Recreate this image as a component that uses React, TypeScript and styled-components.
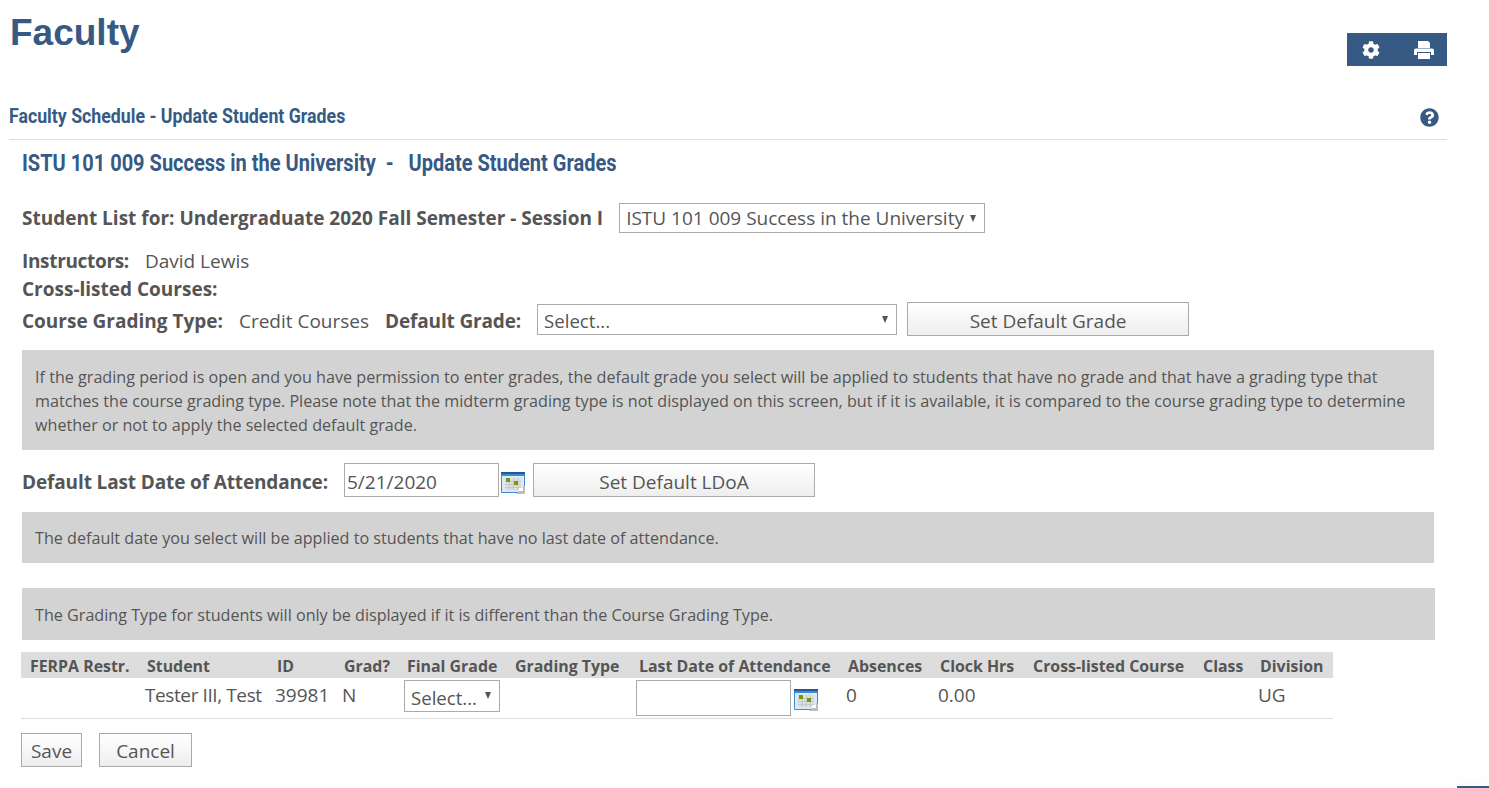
import styled, { createGlobalStyle } from 'styled-components';
import { FaCog, FaQuestionCircle } from 'react-icons/fa';

const GlobalStyle = createGlobalStyle`
  html, body {
    margin: 0;
    padding: 0;
    background: #fff;
    color: #555;
    font-family: "Open Sans", "Liberation Sans", sans-serif;
    font-size: 16px;
  }
  * { box-sizing: border-box; }
`;

const Page = styled.div`
  width: 1489px;
  height: 788px;
  overflow: hidden;
  position: relative;
  padding: 0 42px 0 9px;
`;

const TopBar = styled.div`
  display: flex;
  justify-content: space-between;
  height: 96px;
`;

const PageTitle = styled.h1`
  margin: 12px 0 0 1px;
  font: bold 37px/42px "Liberation Sans", Arial, sans-serif;
  color: #375a85;
`;

const Toolbar = styled.div`
  width: 100px;
  height: 33px;
  margin-top: 33px;
  background: #375a85;
  color: #fff;
  display: flex;
  align-items: center;
  padding: 0 13px 0 15px;
  justify-content: space-between;
  font-size: 18px;
`;

const SectionBar = styled.div`
  display: flex;
  justify-content: space-between;
  align-items: center;
  height: 44px;
  padding: 0 8px 0 0;
  border-bottom: 1px solid #ddd;
  color: #375a85;
  font-size: 19px;
`;

const Condensed = styled.span`
  display: inline-block;
  font-family: Roboto, "Liberation Sans", sans-serif;
  font-weight: 700;
  color: #375a85;
  transform-origin: left center;
  white-space: pre;
`;

const SectionTitle = styled(Condensed)`
  font-size: 20px;
  margin-top: -3px;
  transform: scaleX(0.887);
`;

const Content = styled.div`
  padding: 0 13px;
`;

const CourseTitle = styled.h2`
  margin: 0;
  height: 50px;
  padding-bottom: 3px;
  display: flex;
  align-items: center;
  font-size: 23px;
`;

const CourseHeading = styled(Condensed)`
  transform: scaleX(0.87);
`;

const Row = styled.div<{ $height: number; $gap?: number; $mb?: number; $top?: number }>`
  display: flex;
  align-items: center;
  height: ${p => p.$height}px;
  gap: ${p => p.$gap ?? 0}px;
  margin-bottom: ${p => p.$mb ?? 0}px;
  padding-top: ${p => p.$top ?? 0}px;
  white-space: nowrap;
`;

const Label = styled.span<{ $spacing?: number }>`
  font-weight: 700;
  font-size: 19px;
  letter-spacing: ${p => p.$spacing ?? 0}px;
`;

const Value = styled.span`
  font-size: 19px;
`;

const SelectWrap = styled.span<{ $width: number; $height: number }>`
  position: relative;
  display: inline-block;
  flex: none;
  width: ${p => p.$width}px;
  height: ${p => p.$height}px;

  &::after {
    content: '';
    position: absolute;
    right: 9px;
    top: 12px;
    border-left: 3.5px solid transparent;
    border-right: 3.5px solid transparent;
    border-top: 7px solid #555;
  }
`;

const Select = styled.select<{ $compact?: boolean }>`
  appearance: none;
  display: block;
  width: 100%;
  height: 100%;
  padding: ${p => (p.$compact ? 2 : 0)}px 20px 0 6px;
  border: 1px solid #aaa;
  border-radius: 0;
  background: #fff;
  color: #555;
  font-family: inherit;
  font-size: ${p => (p.$compact ? 18.6 : 19)}px;
`;

const Button = styled.button<{ $width: number; $height?: number }>`
  flex: none;
  width: ${p => p.$width}px;
  height: ${p => p.$height ?? 34}px;
  padding: 3px 0 0;
  border: 1px solid #aaa;
  border-radius: 0;
  background: linear-gradient(to bottom, #fff, #eee);
  color: #555;
  font-family: inherit;
  font-size: 19px;
`;

const GradeControls = styled.div`
  display: flex;
  align-items: flex-start;
  align-self: flex-start;
  gap: 10px;
`;

const GradeSelect = styled.div`
  margin-top: 2px;
`;

const InfoBox = styled.div<{ $height: number; $width?: number; $mb?: number }>`
  display: flex;
  align-items: center;
  width: ${p => p.$width ?? 1412}px;
  height: ${p => p.$height}px;
  margin-bottom: ${p => p.$mb ?? 0}px;
  padding: 1px 13px 0;
  background: #d3d3d3;
  font-size: 16.15px;
  line-height: 24px;
`;

const DateInput = styled.input<{ $width: number; $height: number }>`
  flex: none;
  display: block;
  width: ${p => p.$width}px;
  height: ${p => p.$height}px;
  padding: 3px 2px 0;
  border: 1px solid #aaa;
  border-radius: 0;
  color: #555;
  font-family: inherit;
  font-size: 19px;
`;

const AttendanceControls = styled.div`
  display: flex;
  align-items: flex-start;
  margin-top: -4px;
`;

const CalendarSlot = styled.div<{ $gap: number; $after?: number }>`
  margin: 9px ${p => p.$after ?? 0}px 0 ${p => p.$gap}px;
`;

const CalendarSvg = styled.svg`
  flex: none;
  display: block;
`;

const CalendarIcon = () => (
  <CalendarSvg width="24" height="22" viewBox="0 0 24 22">
    <rect x="0" y="0" width="24" height="21" rx="1" fill="#3f8acb" />
    <rect x="0" y="0" width="24" height="2" fill="#1d5a99" />
    <rect x="1" y="4" width="22" height="16" fill="#d9ebf9" />
    <rect x="4" y="6" width="16" height="12" fill="#dedede" />
    <path d="M4 9.5h16M4 12.5h16M4 15.5h16M8.5 6v12M12.5 6v12M16.5 6v12" stroke="#c8c8c8" strokeWidth="1" />
    <rect x="5" y="6" width="4" height="4" fill="#6f9a12" />
    <rect x="13" y="9" width="4" height="4" fill="#6f9a12" />
    <path d="M24 14v8h-9l3-3h3a1 1 0 0 0 1-1v-4z" fill="#bdbdbd" />
    <rect x="18" y="16" width="4" height="3" fill="#fff" />
  </CalendarSvg>
);

const PrintIcon = () => (
  <svg width="20" height="18" viewBox="0 0 20 18" fill="#fff">
    <path d="M4 0h10l2 2v5H4z" />
    <path d="M2 7.5h16a2 2 0 0 1 2 2V14h-3v-3H3v3H0V9.5a2 2 0 0 1 2-2z" />
    <rect x="4" y="12" width="12" height="6" />
  </svg>
);

const GridTable = styled.table`
  margin: 12px 0 0 -1px;
  width: 1312px;
  table-layout: fixed;
  border-collapse: collapse;
`;

const HeadCell = styled.th<{ $pad?: number }>`
  height: 26px;
  padding: 2px 0 0 ${p => p.$pad ?? 2}px;
  background: #ddd;
  font-size: 15.9px;
  font-weight: 700;
  text-align: left;
  white-space: nowrap;
`;

const BodyRow = styled.tr`
  border-bottom: 1px solid #ddd;
`;

const BodyCell = styled.td`
  height: 40px;
  padding: 0;
  font-size: 19px;
  white-space: nowrap;
  vertical-align: top;
`;

const CellText = styled.div<{ $spacing?: number }>`
  margin-top: 4px;
  line-height: 26px;
  letter-spacing: ${p => p.$spacing ?? 0}px;
`;

const CellControls = styled.div<{ $shift?: number }>`
  display: flex;
  align-items: flex-start;
  margin: 2px 0 0 ${p => p.$shift ?? 0}px;
`;

const Actions = styled.div`
  display: flex;
  gap: 17px;
  margin: 14px 0 0 -1px;
`;

const CornerWidget = styled.div`
  position: absolute;
  right: 0;
  bottom: 0;
  width: 32px;
  height: 2px;
  background: #375a85;
  box-shadow: 0 0 14px rgba(0, 0, 0, 0.12);
`;

const columns = [
  { label: 'FERPA Restr.', width: 124, pad: 9 },
  { label: 'Student', width: 130 },
  { label: 'ID', width: 67 },
  { label: 'Grad?', width: 62 },
  { label: 'Final Grade', width: 109, pad: 3 },
  { label: 'Grading Type', width: 124 },
  { label: 'Last Date of Attendance', width: 209 },
  { label: 'Absences', width: 92 },
  { label: 'Clock Hrs', width: 93 },
  { label: 'Cross-listed Course', width: 170 },
  { label: 'Class', width: 57 },
  { label: 'Division', width: 75 },
];

export default function App() {
  return (
    <Page>
      <GlobalStyle />
      <TopBar>
        <PageTitle>Faculty</PageTitle>
        <Toolbar>
          <FaCog />
          <PrintIcon />
        </Toolbar>
      </TopBar>
      <SectionBar>
        <SectionTitle>Faculty Schedule - Update Student Grades</SectionTitle>
        <FaQuestionCircle />
      </SectionBar>
      <Content>
        <CourseTitle>
          <CourseHeading>ISTU 101 009 Success in the University  -   Update Student Grades</CourseHeading>
        </CourseTitle>
        <Row $height={56} $gap={16}>
          <Label>Student List for: Undergraduate 2020 Fall Semester - Session I</Label>
          <SelectWrap $width={366} $height={30}>
            <Select defaultValue="ISTU">
              <option value="ISTU">ISTU 101 009 Success in the University</option>
            </Select>
          </SelectWrap>
        </Row>
        <Row $height={30} $gap={16}>
          <Label $spacing={-0.33}>Instructors:</Label>
          <Value>David Lewis</Value>
        </Row>
        <Row $height={26}>
          <Label>Cross-listed Courses:</Label>
        </Row>
        <Row $height={38} $gap={16} $mb={10}>
          <Label>Course Grading Type:</Label>
          <Value>Credit Courses</Value>
          <Label $spacing={-0.15}>Default Grade:</Label>
          <GradeControls>
            <GradeSelect>
              <SelectWrap $width={360} $height={31}>
                <Select $compact defaultValue="">
                  <option value="">Select...</option>
                </Select>
              </SelectWrap>
            </GradeSelect>
            <Button $width={282}>Set Default Grade</Button>
          </GradeControls>
        </Row>
        <InfoBox $height={100}>
          If the grading period is open and you have permission to enter grades, the default grade you select will be applied to students that have no grade and that have a grading type that matches the course grading type. Please note that the midterm grading type is not displayed on this screen, but if it is available, it is compared to the course grading type to determine whether or not to apply the selected default grade.
        </InfoBox>
        <Row $height={62} $gap={16} $top={2}>
          <Label $spacing={-0.13}>Default Last Date of Attendance:</Label>
          <AttendanceControls>
            <DateInput $width={155} $height={34} defaultValue="5/21/2020" />
            <CalendarSlot $gap={2} $after={8}>
              <CalendarIcon />
            </CalendarSlot>
            <Button $width={282}>Set Default LDoA</Button>
          </AttendanceControls>
        </Row>
        <InfoBox $height={51} $mb={25}>
          The default date you select will be applied to students that have no last date of attendance.
        </InfoBox>
        <InfoBox $height={52} $width={1413}>
          The Grading Type for students will only be displayed if it is different than the Course Grading Type.
        </InfoBox>
        <GridTable>
          <colgroup>
            {columns.map(col => (
              <col key={col.label} width={col.width} />
            ))}
          </colgroup>
          <thead>
            <tr>
              {columns.map(col => (
                <HeadCell key={col.label} $pad={col.pad}>{col.label}</HeadCell>
              ))}
            </tr>
          </thead>
          <tbody>
            <BodyRow>
              <BodyCell />
              <BodyCell><CellText $spacing={-0.4}>Tester III, Test</CellText></BodyCell>
              <BodyCell><CellText>39981</CellText></BodyCell>
              <BodyCell><CellText>N</CellText></BodyCell>
              <BodyCell>
                <CellControls>
                  <SelectWrap $width={96} $height={32}>
                    <Select $compact defaultValue="">
                      <option value="">Select...</option>
                    </Select>
                  </SelectWrap>
                </CellControls>
              </BodyCell>
              <BodyCell />
              <BodyCell>
                <CellControls $shift={-1}>
                  <DateInput $width={155} $height={36} />
                  <CalendarSlot $gap={3}>
                    <CalendarIcon />
                  </CalendarSlot>
                </CellControls>
              </BodyCell>
              <BodyCell><CellText>0</CellText></BodyCell>
              <BodyCell><CellText>0.00</CellText></BodyCell>
              <BodyCell />
              <BodyCell />
              <BodyCell><CellText>UG</CellText></BodyCell>
            </BodyRow>
          </tbody>
        </GridTable>
        <Actions>
          <Button $width={61}>Save</Button>
          <Button $width={93}>Cancel</Button>
        </Actions>
      </Content>
      <CornerWidget />
    </Page>
  );
}
